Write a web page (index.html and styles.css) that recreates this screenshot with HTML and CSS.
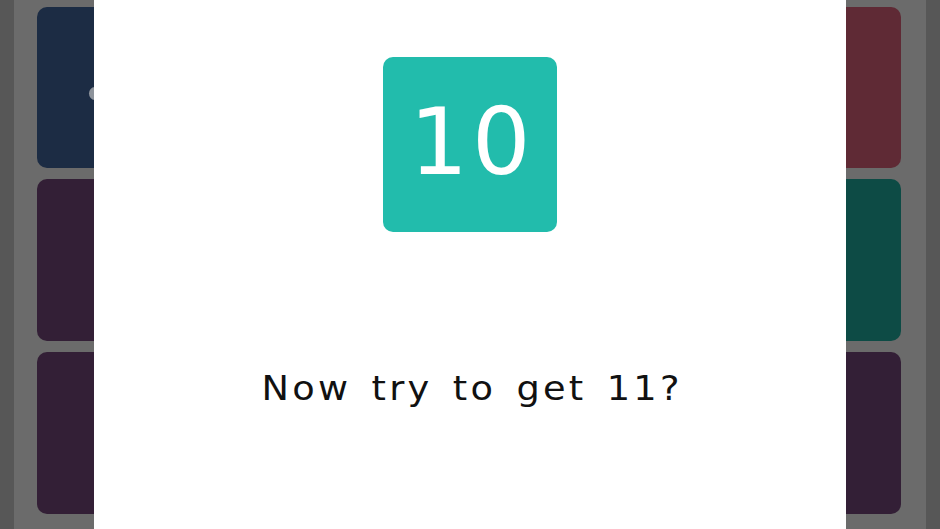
FILE: index.html
```html
<!DOCTYPE html>
<html>
<head>
<meta charset="utf-8">
<link rel="stylesheet" href="styles.css">
</head>
<body>
<div class="app">
  <div class="board">
    <div class="tile blue"><span class="dot"></span></div>
    <div class="tile"></div>
    <div class="tile"></div>
    <div class="tile red"></div>
    <div class="tile purple"></div>
    <div class="tile"></div>
    <div class="tile"></div>
    <div class="tile teal"></div>
    <div class="tile purple"></div>
    <div class="tile"></div>
    <div class="tile"></div>
    <div class="tile purple"></div>
  </div>
  <div class="modal">
    <div class="number">10</div>
    <p class="message">Now try to get 11?</p>
  </div>
</div>
</body>
</html>
```
FILE: styles.css
```css
html, body {
  margin: 0;
  padding: 0;
  height: 100%;
}
body {
  background: #575757;
  font-family: "DejaVu Sans", "Open Sans", sans-serif;
  overflow: hidden;
}
.app {
  position: relative;
  margin: 0 14px;
  height: 529px;
  background: #6b6b6b;
  padding: 7px 25px 0 23px;
  box-sizing: border-box;
}
.board {
  display: grid;
  grid-template-columns: repeat(4, 1fr);
  grid-template-rows: 161px 162px 162px;
  column-gap: 11px;
  row-gap: 11px;
}
.tile {
  position: relative;
  border-radius: 10px;
  background: #331f36;
  overflow: hidden;
}
.tile.blue { background: #1c2c44; }
.tile.red { background: #5f2a35; }
.tile.teal { background: #0d4b45; }
.tile.purple { background: #331f36; }
.dot {
  position: absolute;
  left: 52px;
  top: 80px;
  width: 11px;
  height: 13px;
  border-radius: 50%;
  background: #8d939b;
}
.modal {
  position: absolute;
  top: 0;
  left: 80px;
  width: 752px;
  height: 529px;
  background: #ffffff;
  display: flex;
  flex-direction: column;
  align-items: center;
}
.number {
  margin-top: 57px;
  width: 174px;
  height: 175px;
  border-radius: 10px;
  background: #22bcac;
  color: #ffffff;
  font-size: 92px;
  letter-spacing: 4px;
  text-indent: 4px;
  display: flex;
  align-items: center;
  justify-content: center;
  line-height: 1;
  padding-bottom: 4px;
  box-sizing: border-box;
}
.message {
  margin: 139px 0 0;
  font-size: 34px;
  letter-spacing: 3px;
  word-spacing: 5px;
  padding-left: 3px;
  transform: scaleX(1.08);
  color: #111111;
  line-height: 1;
}
```
